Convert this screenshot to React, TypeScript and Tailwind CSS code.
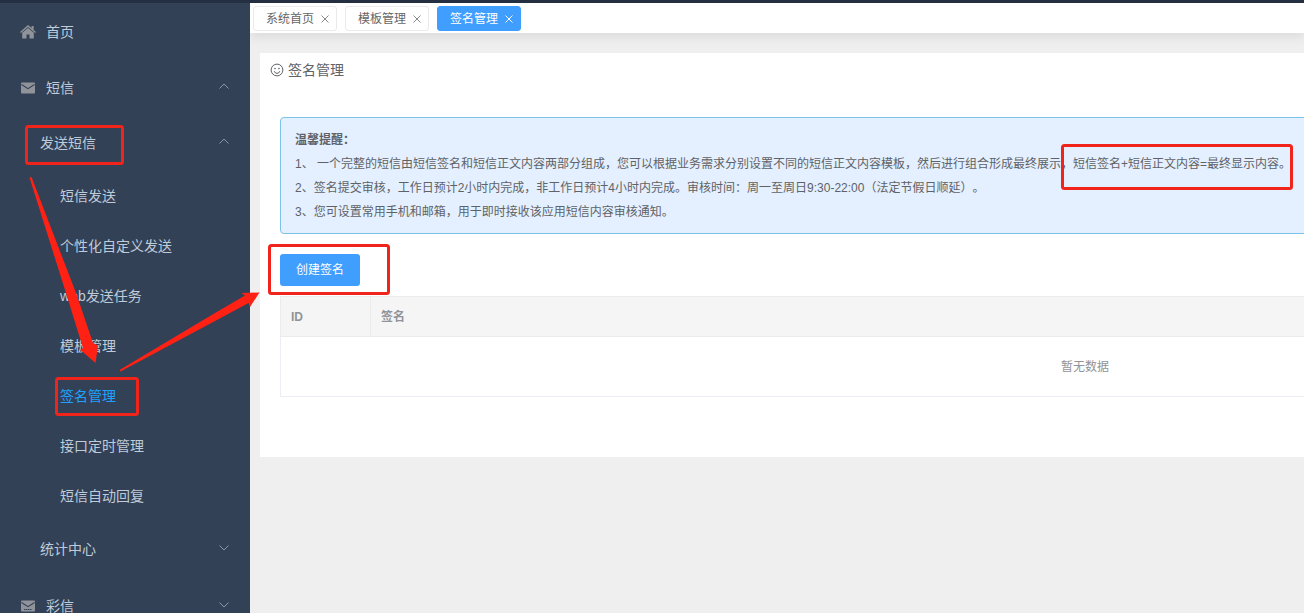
import { useState } from "react";

const sendMenu = [
  "短信发送",
  "个性化自定义发送",
  "web发送任务",
  "模板管理",
  "签名管理",
  "接口定时管理",
  "短信自动回复",
];

const tabs = ["系统首页", "模板管理", "签名管理"];

const tips = [
  "1、 一个完整的短信由短信签名和短信正文内容两部分组成，您可以根据业务需求分别设置不同的短信正文内容模板，然后进行组合形成最终展示，短信签名+短信正文内容=最终显示内容。",
  "2、签名提交审核，工作日预计2小时内完成，非工作日预计4小时内完成。审核时间：周一至周日9:30-22:00（法定节假日顺延）。",
  "3、您可设置常用手机和邮箱，用于即时接收该应用短信内容审核通知。",
];

function Chevron({ open }: { open: boolean }) {
  return (
    <svg viewBox="0 0 12 12" className="mb-1 ml-auto h-3 w-3" fill="none" stroke="#8b97a8" aria-hidden="true">
      <path d={open ? "M1.5 8.5 6 4l4.5 4.5" : "M1.5 4.5 6 9l4.5-4.5"} />
    </svg>
  );
}

function HomeIcon() {
  return (
    <svg viewBox="0 0 16 14" className="h-[14px] w-4" fill="#909399" aria-hidden="true">
      <path d="M8 0 0 7l.9 1L8 1.9 15.1 8l.9-1-2.4-2.1V1h-2v2.1z" />
      <path d="M8 2.9 2.2 7.8V13.5H6.5V9.5h3v4h4.3V7.8z" />
    </svg>
  );
}

function MailIcon({ lined = false }: { lined?: boolean }) {
  return (
    <svg viewBox="0 0 16 12" className="h-3 w-4" aria-hidden="true">
      <rect x="1" y="0.5" width="14" height="11" rx="1" fill="#909399" />
      <path d="M1.5 2.5 8 6.7l6.5-4.2" fill="none" stroke="#334157" strokeWidth="1.1" />
      {lined && <path d="M4 9.5h8" stroke="#334157" strokeDasharray="1.5 0.5" />}
    </svg>
  );
}

function SmileIcon() {
  return (
    <svg viewBox="0 0 14 14" className="h-[14px] w-[14px]" fill="none" stroke="#606266" aria-hidden="true">
      <circle cx="7" cy="7" r="5.9" />
      <path d="M4.2 8.2a2.9 2.9 0 0 0 5.6 0" />
      <circle cx="5" cy="5.5" r="0.8" fill="#606266" stroke="none" />
      <circle cx="9" cy="5.5" r="0.8" fill="#606266" stroke="none" />
    </svg>
  );
}

function CloseIcon() {
  return (
    <svg viewBox="0 0 8 8" className="h-2 w-2" fill="none" stroke="currentColor" aria-hidden="true">
      <path d="M0.5 0.5 7.5 7.5M7.5 0.5 0.5 7.5" />
    </svg>
  );
}

// Red guide marks drawn over the page
function Guide() {
  return (
    <svg className="pointer-events-none absolute inset-0 h-full w-full" aria-hidden="true">
      <g fill="none" stroke="#f0241a" strokeWidth="3">
        <rect x="26.5" y="126.5" width="96" height="37" rx="2" />
        <rect x="56.5" y="378.5" width="81" height="36" rx="2" />
        <rect x="269.5" y="245.5" width="119" height="48" rx="2" />
        <rect x="1062.5" y="145.5" width="229" height="43" rx="2" />
      </g>
      <g fill="#ff2114">
        <path d="M29.5 177.5 31.5 177 76 293 93 343 98 345.5 95.5 363 80.5 350 83 348 66 293z" />
        <path d="M119.5 370 215 313 245 295.5 241.5 293 259.5 292.5 250 307 248.5 303 215 321 120.5 371.5z" />
      </g>
    </svg>
  );
}

export default function App() {
  const [activeTab, setActiveTab] = useState("签名管理");
  const [sendOpen, setSendOpen] = useState(true);

  return (
    <div className="relative flex h-screen flex-col overflow-hidden bg-[#efefef] font-['Liberation_Sans','Noto_Sans_CJK_SC',sans-serif] text-[#606266] [text-spacing-trim:space-all]">
      <header className="h-[3px] shrink-0 bg-[#242f42]" />
      <div className="flex min-h-0 flex-1">
        <nav className="w-[250px] shrink-0 overflow-hidden bg-[#334157] text-sm text-[#bfcbd9]">
          <a href="#home" className="flex h-14 items-center gap-2.5 px-5 pt-0.5">
            <HomeIcon />
            首页
          </a>
          <button className="flex h-14 w-full items-center gap-2.5 px-5 pt-0.5">
            <MailIcon />
            短信
            <Chevron open />
          </button>
          <button
            className="flex h-14 w-full items-center pl-10 pr-5"
            aria-expanded={sendOpen}
            onClick={() => setSendOpen(!sendOpen)}
          >
            发送短信
            <Chevron open={sendOpen} />
          </button>
          {sendOpen && (
            <ul>
              {sendMenu.map((item) => (
                <li key={item}>
                  <a
                    href="#send"
                    className={`flex h-[50px] items-center pl-[60px] ${item === "签名管理" ? "text-[#20a0ff]" : ""}`}
                  >
                    {item}
                  </a>
                </li>
              ))}
            </ul>
          )}
          <button className="flex h-14 w-full items-center pl-10 pr-5">
            统计中心
            <Chevron open={false} />
          </button>
          <button className="flex h-14 w-full items-center gap-2.5 px-5 pt-0.5">
            <MailIcon lined />
            彩信
            <Chevron open={false} />
          </button>
        </nav>

        <div className="min-w-0 flex-1 overflow-hidden">
          <div className="flex h-[30px] items-center gap-2 bg-white px-[3px] text-xs shadow-[0_5px_10px_#dddddd]">
            {tabs.map((tab) => (
              <div
                key={tab}
                className={`flex h-[25px] items-center gap-[7px] rounded-[3px] border pl-3 pr-[7px] pt-px ${
                  tab === activeTab ? "border-[#409eff] bg-[#409eff] text-white" : "border-[#e9eaec] bg-white text-[#666666]"
                }`}
              >
                <button onClick={() => setActiveTab(tab)}>{tab}</button>
                <button aria-label={`关闭${tab}`} className={tab === activeTab ? "text-white" : "text-[#888888]"}>
                  <CloseIcon />
                </button>
              </div>
            ))}
          </div>

          {/* the panel is wider than the window and runs off to the right */}
          <main className="ml-2.5 mt-5 min-w-[1650px] bg-white px-5 pb-[60px]">
            <h1 className="-ml-2.5 flex h-[34px] items-center gap-1 text-sm">
              <SmileIcon />
              签名管理
            </h1>
            <section className="mt-[30px] rounded border border-[#7cc3e8] bg-[#e4f0ff] px-3.5 pb-[9px] pt-2.5 text-xs leading-6">
              <h2 className="font-bold">温馨提醒：</h2>
              {tips.map((tip) => (
                <p key={tip} className="whitespace-nowrap">{tip}</p>
              ))}
            </section>
            <button className="mb-2.5 mt-5 block h-8 rounded-[3px] bg-[#409eff] px-4 text-xs text-white">创建签名</button>
            <table className="w-full table-fixed border border-[#ebeef5] text-xs text-[#909399]">
              <thead className="bg-[#f5f5f5] text-left">
                <tr className="h-10">
                  <th className="w-[90px] border border-[#ebebeb] px-2.5 font-bold">ID</th>
                  <th className="border border-[#ebebeb] px-2.5 font-bold">签名</th>
                </tr>
              </thead>
              <tbody>
                <tr className="h-[60px]">
                  <td colSpan={2} className="text-center">暂无数据</td>
                </tr>
              </tbody>
            </table>
          </main>
        </div>
      </div>
      <Guide />
    </div>
  );
}
